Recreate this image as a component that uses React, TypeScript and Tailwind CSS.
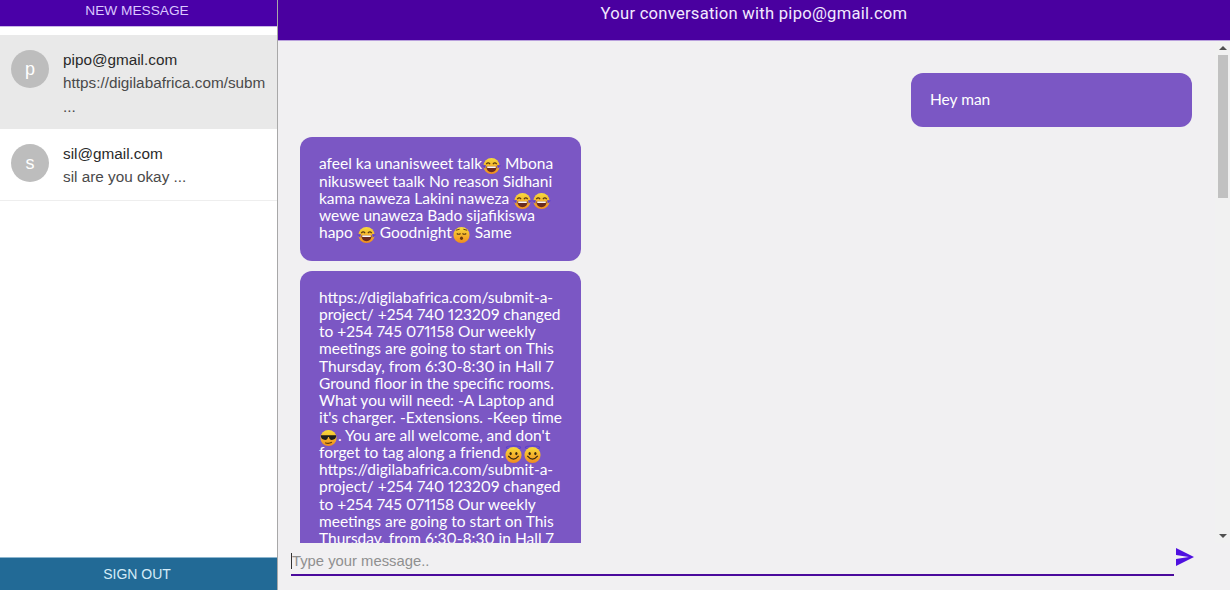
import { ReactNode } from 'react';

type EmojiKind = 'laugh' | 'sleep' | 'cool' | 'halo';

function Emoji({ kind }: { kind: EmojiKind }) {
  return (
    <svg viewBox="0 0 20 20" className="inline-block w-[19px] h-[19px] -my-[3px] align-[-3px]">
      <defs>
        <linearGradient id="face" x1="0" y1="0" x2="0" y2="1">
          <stop offset="0" stopColor="#f8dc3c" />
          <stop offset="1" stopColor="#f08c1e" />
        </linearGradient>
      </defs>
      {kind === 'halo' && <ellipse cx="10" cy="2.5" rx="7.5" ry="1.6" fill="none" stroke="#5a3fd0" strokeWidth="1.2" />}
      <circle cx="10" cy="10.5" r="8.5" fill="url(#face)" />
      {kind === 'laugh' && (
        <>
          <path d="M4.5 8.5 Q6.5 6 8.5 8.5 M11.5 8.5 Q13.5 6 15.5 8.5" fill="none" stroke="#5a3a10" strokeWidth="1.3" />
          <path d="M4.5 11 H15.5 Q15 17 10 17 Q5 17 4.5 11Z" fill="#6a2a20" />
          <path d="M5.5 11 H14.5 V12.6 H5.5Z" fill="#fff" />
          <path d="M0 10 L4 9.5 L3.5 13.5 Z M20 10 L16 9.5 L16.5 13.5 Z" fill="#5a3fd0" />
        </>
      )}
      {kind === 'sleep' && (
        <>
          <path d="M5 9 Q7 10.5 9 9 M11 9 Q13 10.5 15 9" fill="none" stroke="#5a3a10" strokeWidth="1.2" />
          <ellipse cx="10" cy="14" rx="1.6" ry="1.8" fill="#6a3a10" />
          <path d="M4 5.5 L8 4.5 M12 4.5 L16 5.5" stroke="#5a3a10" strokeWidth="1" />
        </>
      )}
      {kind === 'cool' && (
        <>
          <path d="M2 7.5 H18 V9 Q17.5 12.5 13.5 12.5 Q11 12.5 10.5 9.5 H9.5 Q9 12.5 6.5 12.5 Q2.5 12.5 2 9 Z" fill="#1d1d1d" />
          <path d="M6.5 15.5 Q10 17 13.5 15" fill="none" stroke="#5a3a10" strokeWidth="1.2" />
        </>
      )}
      {kind === 'halo' && (
        <>
          <ellipse cx="7" cy="9" rx="1.2" ry="1.7" fill="#3a2a10" />
          <ellipse cx="13" cy="9" rx="1.2" ry="1.7" fill="#3a2a10" />
          <path d="M4.5 11.5 Q10 18 15.5 11.5" fill="none" stroke="#3a2a10" strokeWidth="1.3" />
        </>
      )}
    </svg>
  );
}

function Conversation({ initial, email, preview }: { initial: string; email: string; preview: ReactNode }) {
  return (
    <>
      <div className="w-[38px] h-[38px] shrink-0 rounded-full bg-[#bdbdbd] text-white text-[18px] flex items-center justify-center">
        {initial}
      </div>
      <div className="ml-[14px] -mt-[2px] min-w-0 text-[15.3px] leading-[23px]">
        <div className="text-[#2a2a2a]">{email}</div>
        <div className="text-[#4a4a4a]">{preview}</div>
      </div>
    </>
  );
}

const lines1: ReactNode[] = [
  <>afeel ka unanisweet talk<Emoji kind="laugh" /> Mbona</>,
  'nikusweet taalk No reason Sidhani',
  <>kama naweza Lakini naweza <Emoji kind="laugh" /><Emoji kind="laugh" /></>,
  'wewe unaweza Bado sijafikiswa',
  <>hapo <Emoji kind="laugh" /> Goodnight<Emoji kind="sleep" /> Same</>,
];

const notice = [
  'https://digilabafrica.com/submit-a-',
  'project/ +254 740 123209 changed',
  'to +254 745 071158 Our weekly',
  'meetings are going to start on This',
  'Thursday, from 6:30-8:30 in Hall 7',
  'Ground floor in the specific rooms.',
  'What you will need: -A Laptop and',
  "it's charger. -Extensions. -Keep time",
];

const lines2: ReactNode[] = [
  ...notice,
  <><Emoji kind="cool" />. You are all welcome, and don't</>,
  <>forget to tag along a friend.<Emoji kind="halo" /><Emoji kind="halo" /></>,
  ...notice.slice(0, 5),
];

function Bubble({ lines, mine }: { lines: ReactNode[]; mine?: boolean }) {
  return (
    <div className={`w-[281px] shrink-0 rounded-[12px] bg-[#7b57c4] text-white px-[19px] pt-[18px] pb-[19px] font-['Lato','Noto_Sans',sans-serif] proportional-nums text-[15.5px] leading-[17.25px] ${mine ? 'self-end' : ''}`}>
      {lines.map((line, i) => (
        <div key={i} className="whitespace-nowrap">{line}</div>
      ))}
    </div>
  );
}

function Scrollbar() {
  return (
    <div className="absolute top-0 right-0 bottom-0 w-[15px] bg-[#f1f1f1] flex flex-col items-center">
      <svg viewBox="0 0 8 4" className="w-[8px] h-[4px] mt-[5px] text-[#505050]">
        <path d="M0 4 L4 0 L8 4 Z" fill="currentColor" />
      </svg>
      <div className="w-[10px] h-[143px] mt-[5px] bg-[#c1c1c1]" />
      <svg viewBox="0 0 8 4" className="w-[8px] h-[4px] mt-auto mb-[5px] text-[#505050]">
        <path d="M0 0 L4 4 L8 0 Z" fill="currentColor" />
      </svg>
    </div>
  );
}

export default function App() {
  return (
    <div className="flex w-[1230px] h-[590px] overflow-hidden bg-[#f1f0f2] font-['Liberation_Sans',Arial,sans-serif]">
      {/* Sidebar */}
      <aside className="w-[278px] shrink-0 flex flex-col bg-white border-r border-[#a8a8a8]">
        <div className="h-[27px] shrink-0 bg-[#4a00a8] border-b border-[#c9b6e6] text-[#dcc8ff] text-[13.7px] flex justify-center pt-[1px] pr-[3px]">
          NEW MESSAGE
        </div>
        <div className="flex-1 pt-[8px]">
          <div className="h-[94px] flex items-start pl-[11px] pt-[15px] bg-[#e9e9e9] overflow-hidden">
            <Conversation
              initial="p"
              email="pipo@gmail.com"
              preview={<>https://digilabafrica.com/subm<br /><span className="leading-[26px]">...</span></>}
            />
          </div>
          <div className="h-[72px] flex items-start pl-[11px] pt-[15px] border-b border-[#eeeeee]">
            <Conversation initial="s" email="sil@gmail.com" preview="sil are you okay ..." />
          </div>
        </div>
        <div className="h-[33px] shrink-0 bg-[#226a96] border-t border-[#8db6cf] text-[#d5ecf8] text-[14px] flex items-center justify-center pr-[3px]">
          SIGN OUT
        </div>
      </aside>

      {/* Chat */}
      <main className="flex-1 min-w-0 flex flex-col">
        <div className="h-[41px] shrink-0 bg-[#4a00a0] border-b border-[#b9a0dd] text-[#f2e9ff] text-[16.6px] flex justify-center pt-[2px] font-['Roboto',sans-serif] tracking-[0.25px]">
          Your conversation with pipo@gmail.com
        </div>
        <div className="relative h-[502px] shrink-0">
          <div className="h-full overflow-hidden flex flex-col gap-[10px] pl-[22px] pr-[38px] pt-[32px]">
            <Bubble lines={['Hey man']} mine />
            <Bubble lines={lines1} />
            <Bubble lines={lines2} />
          </div>
          <Scrollbar />
        </div>
        <div className="flex-1 flex items-start pl-[13px] pr-[36px] pt-[4px]">
          <div className="flex-1 h-[29px] border-b-2 border-[#4a0a9c] text-[14.8px] leading-[28px] text-[#8f8f8f]">
            <span className="border-l border-[#333]">Type your message..</span>
          </div>
          <svg viewBox="2 3 21 18" className="w-[18px] h-[18px] ml-[2px] mt-[1px] text-[#4f10e0]" preserveAspectRatio="none">
            <path d="M2.01 21 23 12 2.01 3 2 10l15 2-15 2z" fill="currentColor" />
          </svg>
        </div>
      </main>
    </div>
  );
}
